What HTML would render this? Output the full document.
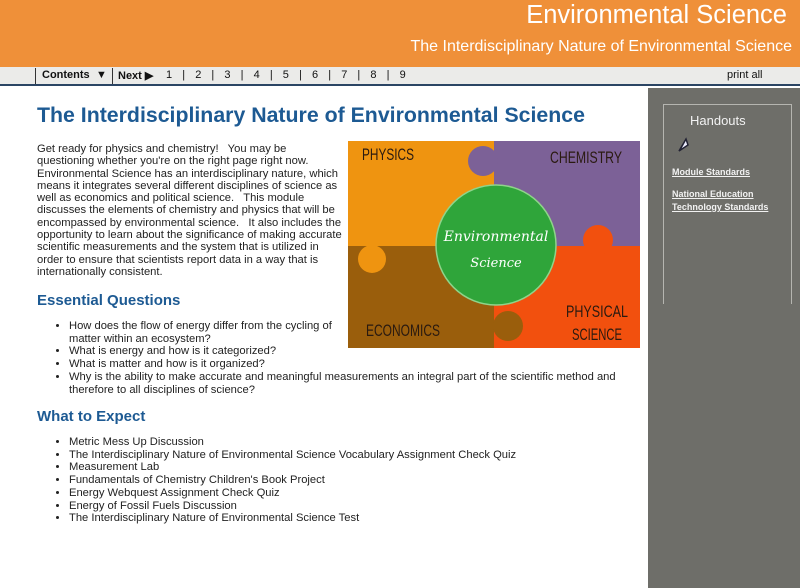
<!DOCTYPE html>
<html><head><style>
*{margin:0;padding:0;box-sizing:border-box}
body{width:800px;height:588px;overflow:hidden;background:#fff;font-family:"Liberation Sans",Arial,sans-serif;position:relative}
.hd{position:absolute;left:0;top:0;width:800px;height:67px;background:#ef9039;color:#fff}
.t1{position:absolute;right:13px;top:1px;font-size:25.5px}
.t2{position:absolute;right:8px;top:38px;font-size:16px}
.nav{position:absolute;left:0;top:67px;width:800px;height:19px;background:#ebebe9;border-bottom:2px solid #2b4564;font-size:11px;color:#111}
.nav span{position:absolute;top:2px}
.sb{position:absolute;left:648px;top:88px;width:152px;height:500px;background:#6e6e69}
.box{position:absolute;left:15px;top:16px;width:129px;height:200px;border:1px solid #b5b5b0;border-bottom:none}
.box h3{font-weight:normal;color:#f2f2f2;font-size:13px;position:absolute;left:26px;top:8px}
.box a{position:absolute;left:8px;color:#f2f2f2;font-size:9px;font-weight:bold;text-decoration:underline;line-height:13px}
h1{position:absolute;left:37px;top:103px;font-size:21.3px;color:#1d5a93}
h2{position:absolute;left:37px;font-size:15px;color:#1d5a93}
.p{position:absolute;left:37px;top:143px;width:310px;font-size:11.2px;line-height:12.3px;color:#222;white-space:nowrap}
ul{position:absolute;left:69px;font-size:11.2px;line-height:12.7px;color:#222;white-space:nowrap}
</style></head><body>
<div class="hd"><div class="t1">Environmental Science</div><div class="t2">The Interdisciplinary Nature of Environmental Science</div></div>
<div class="nav">
<div style="position:absolute;left:35px;top:1px;width:1px;height:16px;background:#333"></div>
<span style="left:42px;font-weight:bold">Contents</span><span style="left:96px">▼</span>
<div style="position:absolute;left:112px;top:1px;width:1px;height:16px;background:#333"></div>
<span style="left:118px;font-weight:bold">Next ▶</span>
<span style="left:166px;word-spacing:2px">1 &nbsp;| &nbsp;2 &nbsp;| &nbsp;3 &nbsp;| &nbsp;4 &nbsp;| &nbsp;5 &nbsp;| &nbsp;6 &nbsp;| &nbsp;7 &nbsp;| &nbsp;8 &nbsp;| &nbsp;9</span>
<span style="left:727px">print all</span>
</div>
<div class="sb"><div class="box"><h3>Handouts</h3>
<svg style="position:absolute;left:12px;top:28px" width="14" height="20"><path d="M3 18 L10 6 L12 12 Z M10 6 L5 15" stroke="#223" stroke-width="1.5" fill="#eef"/></svg>
<a style="top:61px">Module Standards</a>
<a style="top:83px">National Education<br>Technology Standards</a></div></div>
<h1>The Interdisciplinary Nature of Environmental Science</h1>
<div class="p">Get ready for physics and chemistry! &nbsp; You may be<br>questioning whether you're on the right page right now.<br>Environmental Science has an interdisciplinary nature, which<br>means it integrates several different disciplines of science as<br>well as economics and political science. &nbsp; This module<br>discusses the elements of chemistry and physics that will be<br>encompassed by environmental science. &nbsp; It also includes the<br>opportunity to learn about the significance of making accurate<br>scientific measurements and the system that is utilized in<br>order to ensure that scientists report data in a way that is<br>internationally consistent.</div>
<svg style="position:absolute;left:348px;top:141px" width="292" height="207">
<rect x="0" y="0" width="146" height="105" fill="#ef9410"/>
<rect x="146" y="0" width="146" height="105" fill="#7c6197"/>
<rect x="0" y="105" width="146" height="102" fill="#9a5e0c"/>
<rect x="146" y="105" width="146" height="102" fill="#f2500e"/>
<circle cx="135" cy="20" r="15" fill="#7c6197"/>
<circle cx="24" cy="118" r="14" fill="#ef9410"/>
<circle cx="250" cy="99" r="15" fill="#f2500e"/>
<circle cx="160" cy="185" r="15" fill="#9a5e0c"/>
<circle cx="148" cy="104" r="60" fill="#2fa53a" stroke="#8fd48a" stroke-width="1.5"/>
<text x="148" y="100" text-anchor="middle" fill="#fff" font-family="DejaVu Serif" font-style="italic" font-size="14">Environmental</text>
<text x="148" y="126" text-anchor="middle" fill="#fff" font-family="DejaVu Serif" font-style="italic" font-size="13">Science</text>
<g font-family="Liberation Sans" fill="#2a1a10" font-size="17">
<text x="14" y="19" textLength="52" lengthAdjust="spacingAndGlyphs">PHYSICS</text>
<text x="202" y="22" textLength="72" lengthAdjust="spacingAndGlyphs">CHEMISTRY</text>
<text x="18" y="195" textLength="74" lengthAdjust="spacingAndGlyphs">ECONOMICS</text>
<text x="218" y="176" textLength="62" lengthAdjust="spacingAndGlyphs">PHYSICAL</text>
<text x="224" y="199" textLength="50" lengthAdjust="spacingAndGlyphs">SCIENCE</text></g>
</svg>
<h2 style="top:292px">Essential Questions</h2>
<ul style="top:320px">
<li>How does the flow of energy differ from the cycling of<br>matter within an ecosystem?</li>
<li>What is energy and how is it categorized?</li>
<li>What is matter and how is it organized?</li>
<li>Why is the ability to make accurate and meaningful measurements an integral part of the scientific method and<br>therefore to all disciplines of science?</li>
</ul>
<h2 style="top:408px">What to Expect</h2>
<ul style="top:436px">
<li>Metric Mess Up Discussion</li>
<li>The Interdisciplinary Nature of Environmental Science Vocabulary Assignment Check Quiz</li>
<li>Measurement Lab</li>
<li>Fundamentals of Chemistry Children's Book Project</li>
<li>Energy Webquest Assignment Check Quiz</li>
<li>Energy of Fossil Fuels Discussion</li>
<li>The Interdisciplinary Nature of Environmental Science Test</li>
</ul>
</body></html>
